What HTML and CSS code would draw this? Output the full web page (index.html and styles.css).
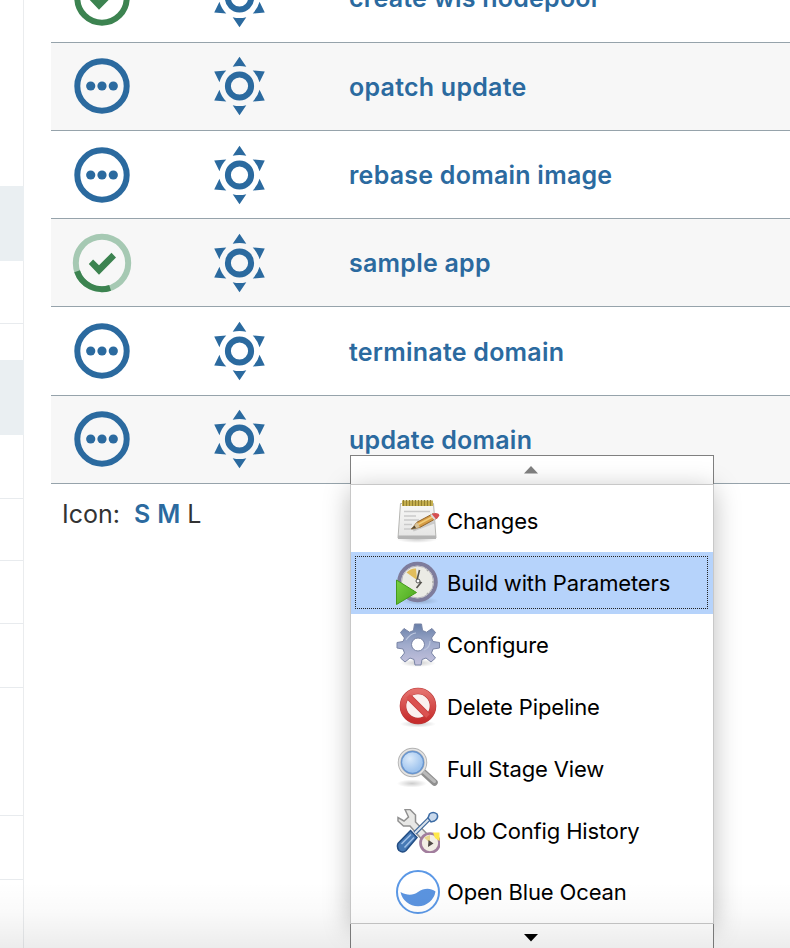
FILE: index.html
```html
<!DOCTYPE html>
<html lang="en">
<head>
<meta charset="utf-8">
<title>Jobs</title>
<link rel="stylesheet" href="styles.css">
</head>
<body>
<svg class="defs" aria-hidden="true">
  <defs>
    <symbol id="pending" viewBox="-30 -30 60 60">
      <circle r="24.7" fill="none" stroke="#2b6a9f" stroke-width="6"/>
      <circle cx="-11.3" r="4.6" fill="#2b6a9f"/><circle r="4.6" fill="#2b6a9f"/><circle cx="11.3" r="4.6" fill="#2b6a9f"/>
    </symbol>
    <symbol id="success" viewBox="-30 -30 60 60">
      <circle r="24.7" fill="none" stroke="#3c8350" stroke-width="6"/>
      <path d="M-13.2 1 -8.9 -3.5 -3 2.3 9.5 -10.2 14 -5.5 -3 11.7Z" fill="#3c8350"/>
    </symbol>
    <symbol id="running" viewBox="-30 -30 60 60">
      <circle r="26.2" fill="none" stroke="#a6c9b3" stroke-width="6"/>
      <path d="M-24.9 8.2A26.2 26.2 0 0 0 8.1 24.9" fill="none" stroke="#3c8350" stroke-width="6"/>
      <path d="M-13.2 1 -8.9 -3.5 -3 2.3 9.5 -10.2 14 -5.5 -3 11.7Z" fill="#3c8350"/>
    </symbol>
    <path id="ray" d="M0 -29.2 6.8 -19.2Q0 -21 -6.8 -19.2Z"/>
    <symbol id="sun" viewBox="-30.5 -30 60 60">
      <g fill="#2b6a9f">
        <use href="#ray"/><use href="#ray" transform="rotate(60)"/><use href="#ray" transform="rotate(120)"/>
        <use href="#ray" transform="rotate(180)"/><use href="#ray" transform="rotate(240)"/><use href="#ray" transform="rotate(300)"/>
      </g>
      <circle r="11.6" fill="none" stroke="#2b6a9f" stroke-width="6"/>
    </symbol>
    <linearGradient id="paper" x2="0" y2="1"><stop stop-color="#f8f8f6"/><stop offset="1" stop-color="#e4e4e4"/></linearGradient>
    <linearGradient id="gearFill" x2="0" y2="1"><stop stop-color="#687fa8"/><stop offset=".5" stop-color="#a0abcc"/><stop offset="1" stop-color="#c5c2dd"/></linearGradient>
    <linearGradient id="redFill" x2="0" y2="1"><stop stop-color="#e4706c"/><stop offset="1" stop-color="#c62c2c"/></linearGradient>
    <linearGradient id="greenFill" x2="1" y2="1"><stop stop-color="#79d143"/><stop offset="1" stop-color="#4aa51d"/></linearGradient>
    <radialGradient id="glass" cx=".4" cy=".35"><stop stop-color="#dcebfb"/><stop offset="1" stop-color="#9fc4ee"/></radialGradient>
    <radialGradient id="ground"><stop stop-color="#000" stop-opacity=".2"/><stop offset="1" stop-color="#000" stop-opacity="0"/></radialGradient>
  </defs>
</svg>

<div class="page">
  <aside class="side">
    <div class="seg s186"></div>
    <div class="seg s75 shade"></div>
    <div class="seg s63 line"></div>
    <div class="seg s36"></div>
    <div class="seg s75 shade"></div>
    <div class="seg s64 line"></div>
    <div class="seg s62 line"></div>
    <div class="seg s63 line"></div>
    <div class="seg s64 line"></div>
    <div class="seg s128 line"></div>
    <div class="seg s64 line"></div>
  </aside>

  <main class="main">
    <div class="jobs">
      <div class="row first"><svg class="status"><use href="#success"/></svg><svg class="weather"><use href="#sun"/></svg><a class="job">create wls nodepool</a></div>
      <div class="row alt"><svg class="status"><use href="#pending"/></svg><svg class="weather"><use href="#sun"/></svg><a class="job">opatch update</a></div>
      <div class="row low"><svg class="status"><use href="#pending"/></svg><svg class="weather"><use href="#sun"/></svg><a class="job">rebase domain image</a></div>
      <div class="row alt low"><svg class="status"><use href="#running"/></svg><svg class="weather"><use href="#sun"/></svg><a class="job">sample app</a></div>
      <div class="row tall"><svg class="status"><use href="#pending"/></svg><svg class="weather"><use href="#sun"/></svg><a class="job">terminate domain</a></div>
      <div class="row alt"><svg class="status"><use href="#pending"/></svg><svg class="weather"><use href="#sun"/></svg><a class="job">update domain</a></div>
    </div>
    <div class="sizes"><span class="label">Icon:</span><a>S</a><a>M</a><span>L</span></div>
  </main>
</div>

<div class="menu">
  <div class="scroll up"><svg width="14" height="8"><path d="M7 0 14 7.5H0Z" fill="#808080"/></svg></div>
  <div class="items">
    <div class="item">
      <svg class="icon" viewBox="0 0 44 44">
        <ellipse cx="21" cy="40" rx="21" ry="4" fill="url(#ground)"/>
        <path d="M4.500 4.500H37.500L40 39H2Z" fill="url(#paper)" stroke="#b5b5b2"/>
        <path d="M2 36.500H40V40H2Z" fill="#b4b4b4"/>
        <path d="M8 12.500H34M8 17H20M8 21H23M8 25.500H16M8 30H20" stroke="#cacaca" stroke-width="1.700"/>
        <path d="M6 1.500H37V7H6Z" fill="#c9b351"/>
        <path d="M7.500 1V7M10.500 1V7M13.500 1V7M16.500 1V7M19.500 1V7M22.500 1V7M25.500 1V7M28.500 1V7M31.500 1V7M34.500 1V7" stroke="#938030" stroke-width="1.200"/>
        <path d="M17 31 38 23" stroke="#999" stroke-width="3" opacity=".4"/>
        <path d="M15.500 30 21 23.200 37 14.700 41.500 18.700 24 28.300Z" fill="#d79d46" stroke="#91642a"/>
        <path d="M22 25.500 38 17" stroke="#f1cc79" stroke-width="1.500"/>
        <path d="M15.500 30 21 23.200 24 28.300Z" fill="#d8c39b"/><path d="M15 30.300 18.500 26.500 20 29Z" fill="#554935"/>
        <path d="M35 15.800Q38 13 42.500 14.700 45 17 39 20.500Z" fill="#d65051"/><path d="M35 15.500 39 20.500" stroke="#ddd" stroke-width="2"/>
      </svg><span>Changes</span>
    </div>
    <div class="item active">
      <svg class="icon" viewBox="0 0 44 44">
        <ellipse cx="24" cy="40" rx="19" ry="4" fill="url(#ground)"/>
        <circle cx="21.500" cy="21" r="18.300" fill="#ebebe5" stroke="#7e7c9c" stroke-width="4"/>
        <circle cx="21.500" cy="21" r="16" fill="none" stroke="#b5b3bd" stroke-width="1"/>
        <path d="M21 19 10.500 11.500Q15 7 20 7.500Z" fill="#e1bd5b"/>
        <path d="M21 19 23.500 9M21 20 25 21.500 20.500 27" fill="none" stroke="#55534e" stroke-width="1.600"/>
        <circle cx="22" cy="20" r="2" fill="#fff" stroke="#555"/>
        <path d="M31 10 32 9M36 21H38M31 32 32 33" stroke="#aaa" stroke-width="1.500"/>
        <path d="M.500 19 20.500 31.500 .500 43.500Z" fill="url(#greenFill)" stroke="#449a1b"/>
      </svg><span>Build with Parameters</span>
    </div>
    <div class="item">
      <svg class="icon" viewBox="0 0 44 44">
        <ellipse cx="22" cy="40" rx="18" ry="4" fill="url(#ground)"/>
        <path fill-rule="evenodd" fill="url(#gearFill)" stroke="#7984a5" stroke-width="1" d="M18.500 1H25.500L26.500 7.500 30.500 9.200 36 5.500 39.500 9.500 35.500 15 37 18.500 43.500 19.500V25L37 26 35.500 30 39.500 35 35 39 30 35 26 36.500 25 42H19L18 36.500 14 35 9 39 4.500 35 8.500 30 7 26 1 25V19.500L7 18.500 8.500 15 4.500 9.500 8 5.500 13.500 9.200 17.500 7.500ZM22 15A6.500 6.500 0 1 0 22 28A6.500 6.500 0 1 0 22 15Z"/>
        <path d="M10 17Q15 10 20 10M28 27Q34 25 34 18" fill="none" stroke="#bdc7de" stroke-width="1.200"/>
      </svg><span>Configure</span>
    </div>
    <div class="item">
      <svg class="icon" viewBox="0 0 44 44">
        <ellipse cx="22" cy="39" rx="18" ry="3.500" fill="url(#ground)"/>
        <circle cx="22" cy="21" r="15" fill="#fbf1ef" stroke="#b83a3a" stroke-width="6.600"/>
        <path d="M12 11 32 31" stroke="#c63a3a" stroke-width="6.600"/>
        <circle cx="22" cy="21" r="15" fill="none" stroke="url(#redFill)" stroke-width="5.500"/>
        <path d="M12 11 32 31" stroke="#da5250" stroke-width="5"/>
      </svg><span>Delete Pipeline</span>
    </div>
    <div class="item">
      <svg class="icon" viewBox="0 0 44 44">
        <ellipse cx="16" cy="36.500" rx="15" ry="4" fill="url(#ground)"/>
        <path d="M26 24 38.500 35.500" stroke="#8f8f8f" stroke-width="6.500" stroke-linecap="round"/>
        <path d="M26 23.500 38.500 34.500" stroke="#bababa" stroke-width="3" stroke-linecap="round"/>
        <circle cx="16.500" cy="15.500" r="13" fill="url(#glass)" stroke="#b3b3b3" stroke-width="3.500"/>
        <circle cx="16.500" cy="15.500" r="13" fill="none" stroke="#e5e5e5" stroke-width="1.700"/>
        <circle cx="16.500" cy="15.500" r="11" fill="none" stroke="#6996cf" stroke-width="1.300"/>
      </svg><span>Full Stage View</span>
    </div>
    <div class="item">
      <svg class="icon" viewBox="0 0 44 44">
        <path d="M9 .5H14L19.500 6V13L34 28 29 34 14 17H7.500L2 12 2 8.500 8 12 12.500 8Z" fill="#e8e8e6" stroke="#919191" stroke-width="1.500"/>
        <path d="M19 24 34.500 8.500" stroke="#3e6799" stroke-width="4.500"/><path d="M19 24 34.500 8.500" stroke="#dce4ed" stroke-width="2"/>
        <path d="M32 9 33.500 5Q37 2 41 5 43 9 38.500 12L35 13Z" fill="#c9d9ec" stroke="#3d6ca5" stroke-width="1.500"/>
        <path d="M14.500 21.500 21 28.500 10 41.500Q7 44.500 3 41.500 .5 38 2 34.500Z" fill="#4679b5" stroke="#234d83" stroke-width="1.500"/>
        <path d="M5.500 35 15 25.500M8.500 38.500 18 28.500" stroke="#a0c1e8" stroke-width="1.500"/>
        <circle cx="34" cy="34" r="9.500" fill="#f2eee5" stroke="#a17d9d" stroke-width="2.700"/>
        <path d="M37 23.500H43.500V32L39 29Z" fill="#ffe84b"/><path d="M34 34 28 28.500 34 26Z" fill="#e8d68a"/>
        <path d="M32.500 31 37.500 34.500 32 38Z" fill="#4f4945"/>
      </svg><span>Job Config History</span>
    </div>
    <div class="item last">
      <svg class="icon" viewBox="0 0 44 44">
        <circle cx="22" cy="22" r="21" fill="#fff" stroke="#5b98e6" stroke-width="2"/>
        <path d="M4.500 22C11 25.500 17 25.500 22 22 28 18 34 17.500 39.500 21.500A17.800 17.800 0 0 1 4.500 22Z" fill="#5b94e0"/>
      </svg><span>Open Blue Ocean</span>
    </div>
  </div>
  <div class="scroll down"><svg width="14" height="8"><path d="M0 0H14L7 7.500Z" fill="#000"/></svg></div>
</div>
<div class="fade"></div>
</body>
</html>
```
FILE: styles.css
```css
* { box-sizing: border-box; }
body {
  margin: 0;
  height: 948px;
  overflow: hidden;
  position: relative;
  background: #fff;
  color: #333;
  font-family: Inter, "Liberation Sans", sans-serif;
}
.defs { position: absolute; width: 0; height: 0; }
.page { display: flex; height: 948px; }

.side { width: 24px; flex: none; border-right: 1px solid #eaecee; }
.seg { width: 23px; }
.shade { background: #eaeff2; width: 24px; }
.line { border-bottom: 1px solid #e8ebee; }
.s186 { height: 186px; }
.s75 { height: 75px; }
.s63 { height: 63px; }
.s36 { height: 36px; }
.s64 { height: 64px; }
.s62 { height: 62px; }
.s128 { height: 128px; }

.main { flex: 1; padding-left: 27px; min-width: 0; }
.row {
  display: grid;
  grid-template-columns: 137px 128.500px 1fr;
  align-items: center;
  height: 88px;
  padding: 0 0 1px 21px;
  border-bottom: 1px solid #96a3ab;
}
.row.first { margin-top: -45px; }
.row.low { padding-bottom: 0; }
.row.tall { height: 89px; padding-bottom: 0; }
.row.alt { background: #f7f7f7; }
.status, .weather { width: 60px; height: 60px; display: block; }
.job {
  margin-left: 11.500px;
  padding-top: 1px;
  color: #2b6a9f;
  font-size: 25px;
  font-weight: 600;
  letter-spacing: .24px;
  white-space: nowrap;
}
.low .job { padding-top: 0; }
.first .job { padding-top: 0; }
.sizes {
  display: flex;
  gap: 7px;
  padding: 14px 0 0 11px;
  font-size: 25px;
  line-height: 32px;
}
.sizes .label { margin-right: 7px; }
.sizes a { color: #2b6a9f; font-weight: 600; }

.menu {
  position: absolute;
  left: 350px;
  top: 455px;
  width: 364px;
  height: 500px;
  color: #000;
}
.scroll {
  display: flex;
  justify-content: center;
  border: 1px solid #808080;
  background: #fff;
}
.up { height: 29px; border-bottom: 0; padding: 10px 3px 0 0; }
.down { position: relative; height: 40px; border-top: 0; padding: 10px 3px 0 0; }
.items {
  position: relative;
  height: 440px;
  border: 1px solid #c8c8c8;
  background: #fff;
  box-shadow: 0 5px 25px rgba(0, 0, 0, .26);
}
.item {
  display: flex;
  align-items: center;
  height: 62px;
  padding-left: 45px;
  gap: 7px;
  font-size: 22px;
  letter-spacing: -.15px;
  white-space: nowrap;
}
.item:first-child { height: 67px; padding-top: 5px; }
.item.last { height: 60px; }
.active { position: relative; background: #b6d3fb; }
.active::after {
  content: "";
  position: absolute;
  inset: 4px 5px 5px 4px;
  border: 1px dotted #222;
}
.icon { width: 44px; height: 44px; flex: none; }
.fade {
  position: absolute;
  left: 0;
  right: 0;
  bottom: 0;
  height: 66px;
  background: linear-gradient(rgba(0, 0, 0, 0), rgba(0, 0, 0, .02) 45%, rgba(0, 0, 0, .075));
}
```
